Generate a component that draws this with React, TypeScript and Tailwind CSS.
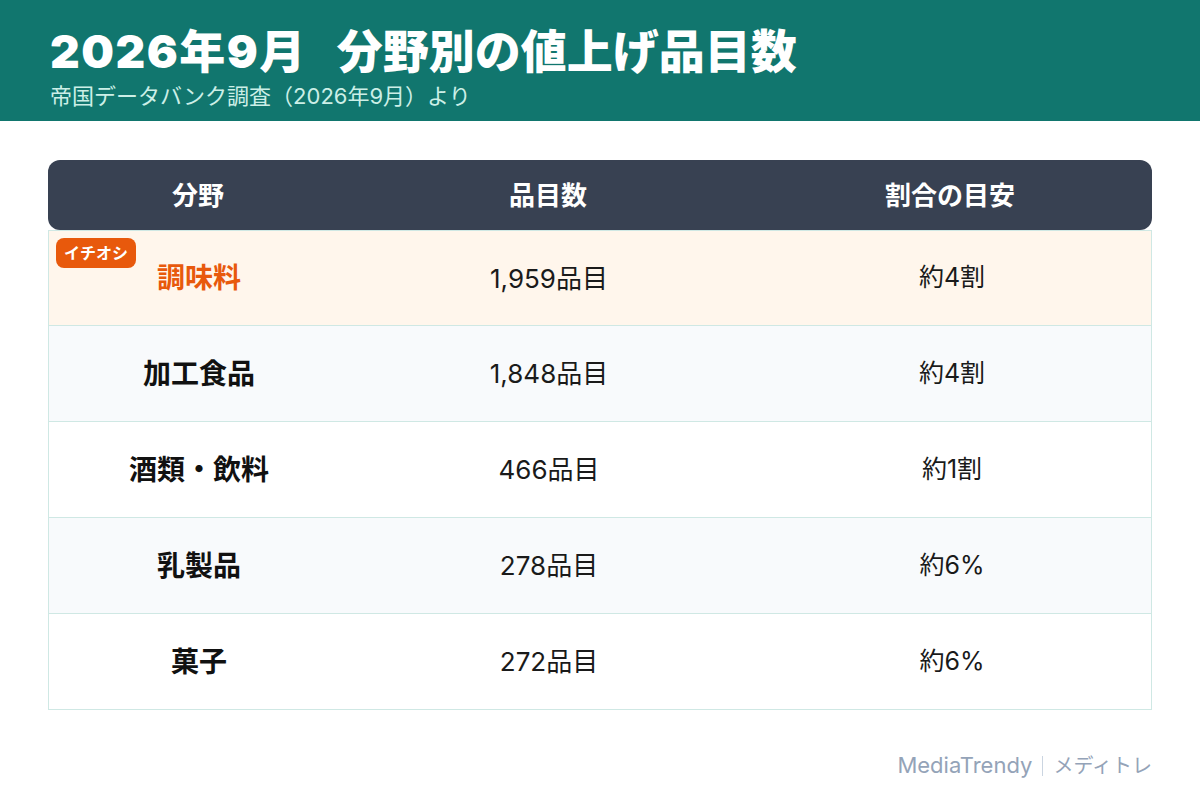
const font = {
  fontFamily: 'Inter, "Noto Sans CJK JP", sans-serif',
};

interface Row {
  category: string;
  count: string;
  ratio: string;
  pick?: boolean;
}

const rows: Row[] = [
  { category: "調味料", count: "1,959品目", ratio: "約4割", pick: true },
  { category: "加工食品", count: "1,848品目", ratio: "約4割" },
  { category: "酒類・飲料", count: "466品目", ratio: "約1割" },
  { category: "乳製品", count: "278品目", ratio: "約6%" },
  { category: "菓子", count: "272品目", ratio: "約6%" },
];

export default function App() {
  return (
    <div className="w-[1200px] h-[790px] bg-white flex flex-col" style={font}>
      <div className="bg-[#11766e] h-[121px] px-[50px] pt-[21px]">
        <h1 className="text-white text-[46px] font-black leading-[60px] flex">
          <span className="tracking-[1.5px]">2026年9月</span>
          <span className="ml-[30px]">分野別の値上げ品目数</span>
        </h1>
        <p className="text-[#ccefe7] text-[22px] leading-[28px] mt-[1px]">
          帝国データバンク調査（2026年9月）より
        </p>
      </div>

      <div className="mx-[48px] mt-[39px]">
        <div className="grid grid-cols-[300px_400px_1fr] h-[70px] bg-[#384152] rounded-xl text-white text-[26px] font-bold">
          <div className="flex items-center justify-center">分野</div>
          <div className="flex items-center justify-center">品目数</div>
          <div className="flex items-center justify-center">割合の目安</div>
        </div>
        <div className="border-x border-[#cfe8e4]">
          {rows.map((row, i) => (
            <div
              key={row.category}
              className={
                "relative grid grid-cols-[300px_400px_1fr] h-[96px] border-b border-[#cfe8e4] " +
                (row.pick ? "bg-[#fff6ec] border-t" : i % 2 === 1 ? "bg-[#f8fafc]" : "bg-white")
              }
            >
              {row.pick && (
                <span className="absolute left-[7px] top-[7px] bg-[#e8590c] text-white text-[16px] font-bold rounded-lg px-[8px] h-[30px] flex items-center">
                  イチオシ
                </span>
              )}
              <div
                className={
                  "flex items-center justify-center text-[28px] font-bold " +
                  (row.pick ? "text-[#e8590c]" : "text-[#111111]")
                }
              >
                {row.category}
              </div>
              <div className="flex items-center justify-center text-[26px] text-[#1a1a1a]">{row.count}</div>
              <div className="flex items-center justify-center text-[25px] text-[#1a1a1a] pl-[4px]">{row.ratio}</div>
            </div>
          ))}
        </div>
      </div>

      <div className="mt-auto mb-[8px] mr-[48px] flex justify-end items-center text-[22px] text-[#94a3b8]">
        <span>MediaTrendy</span>
        <span className="mx-[10px] w-px h-[20px] bg-[#cbd5e1]" />
        <span className="text-[20px]">メディトレ</span>
      </div>
    </div>
  );
}
